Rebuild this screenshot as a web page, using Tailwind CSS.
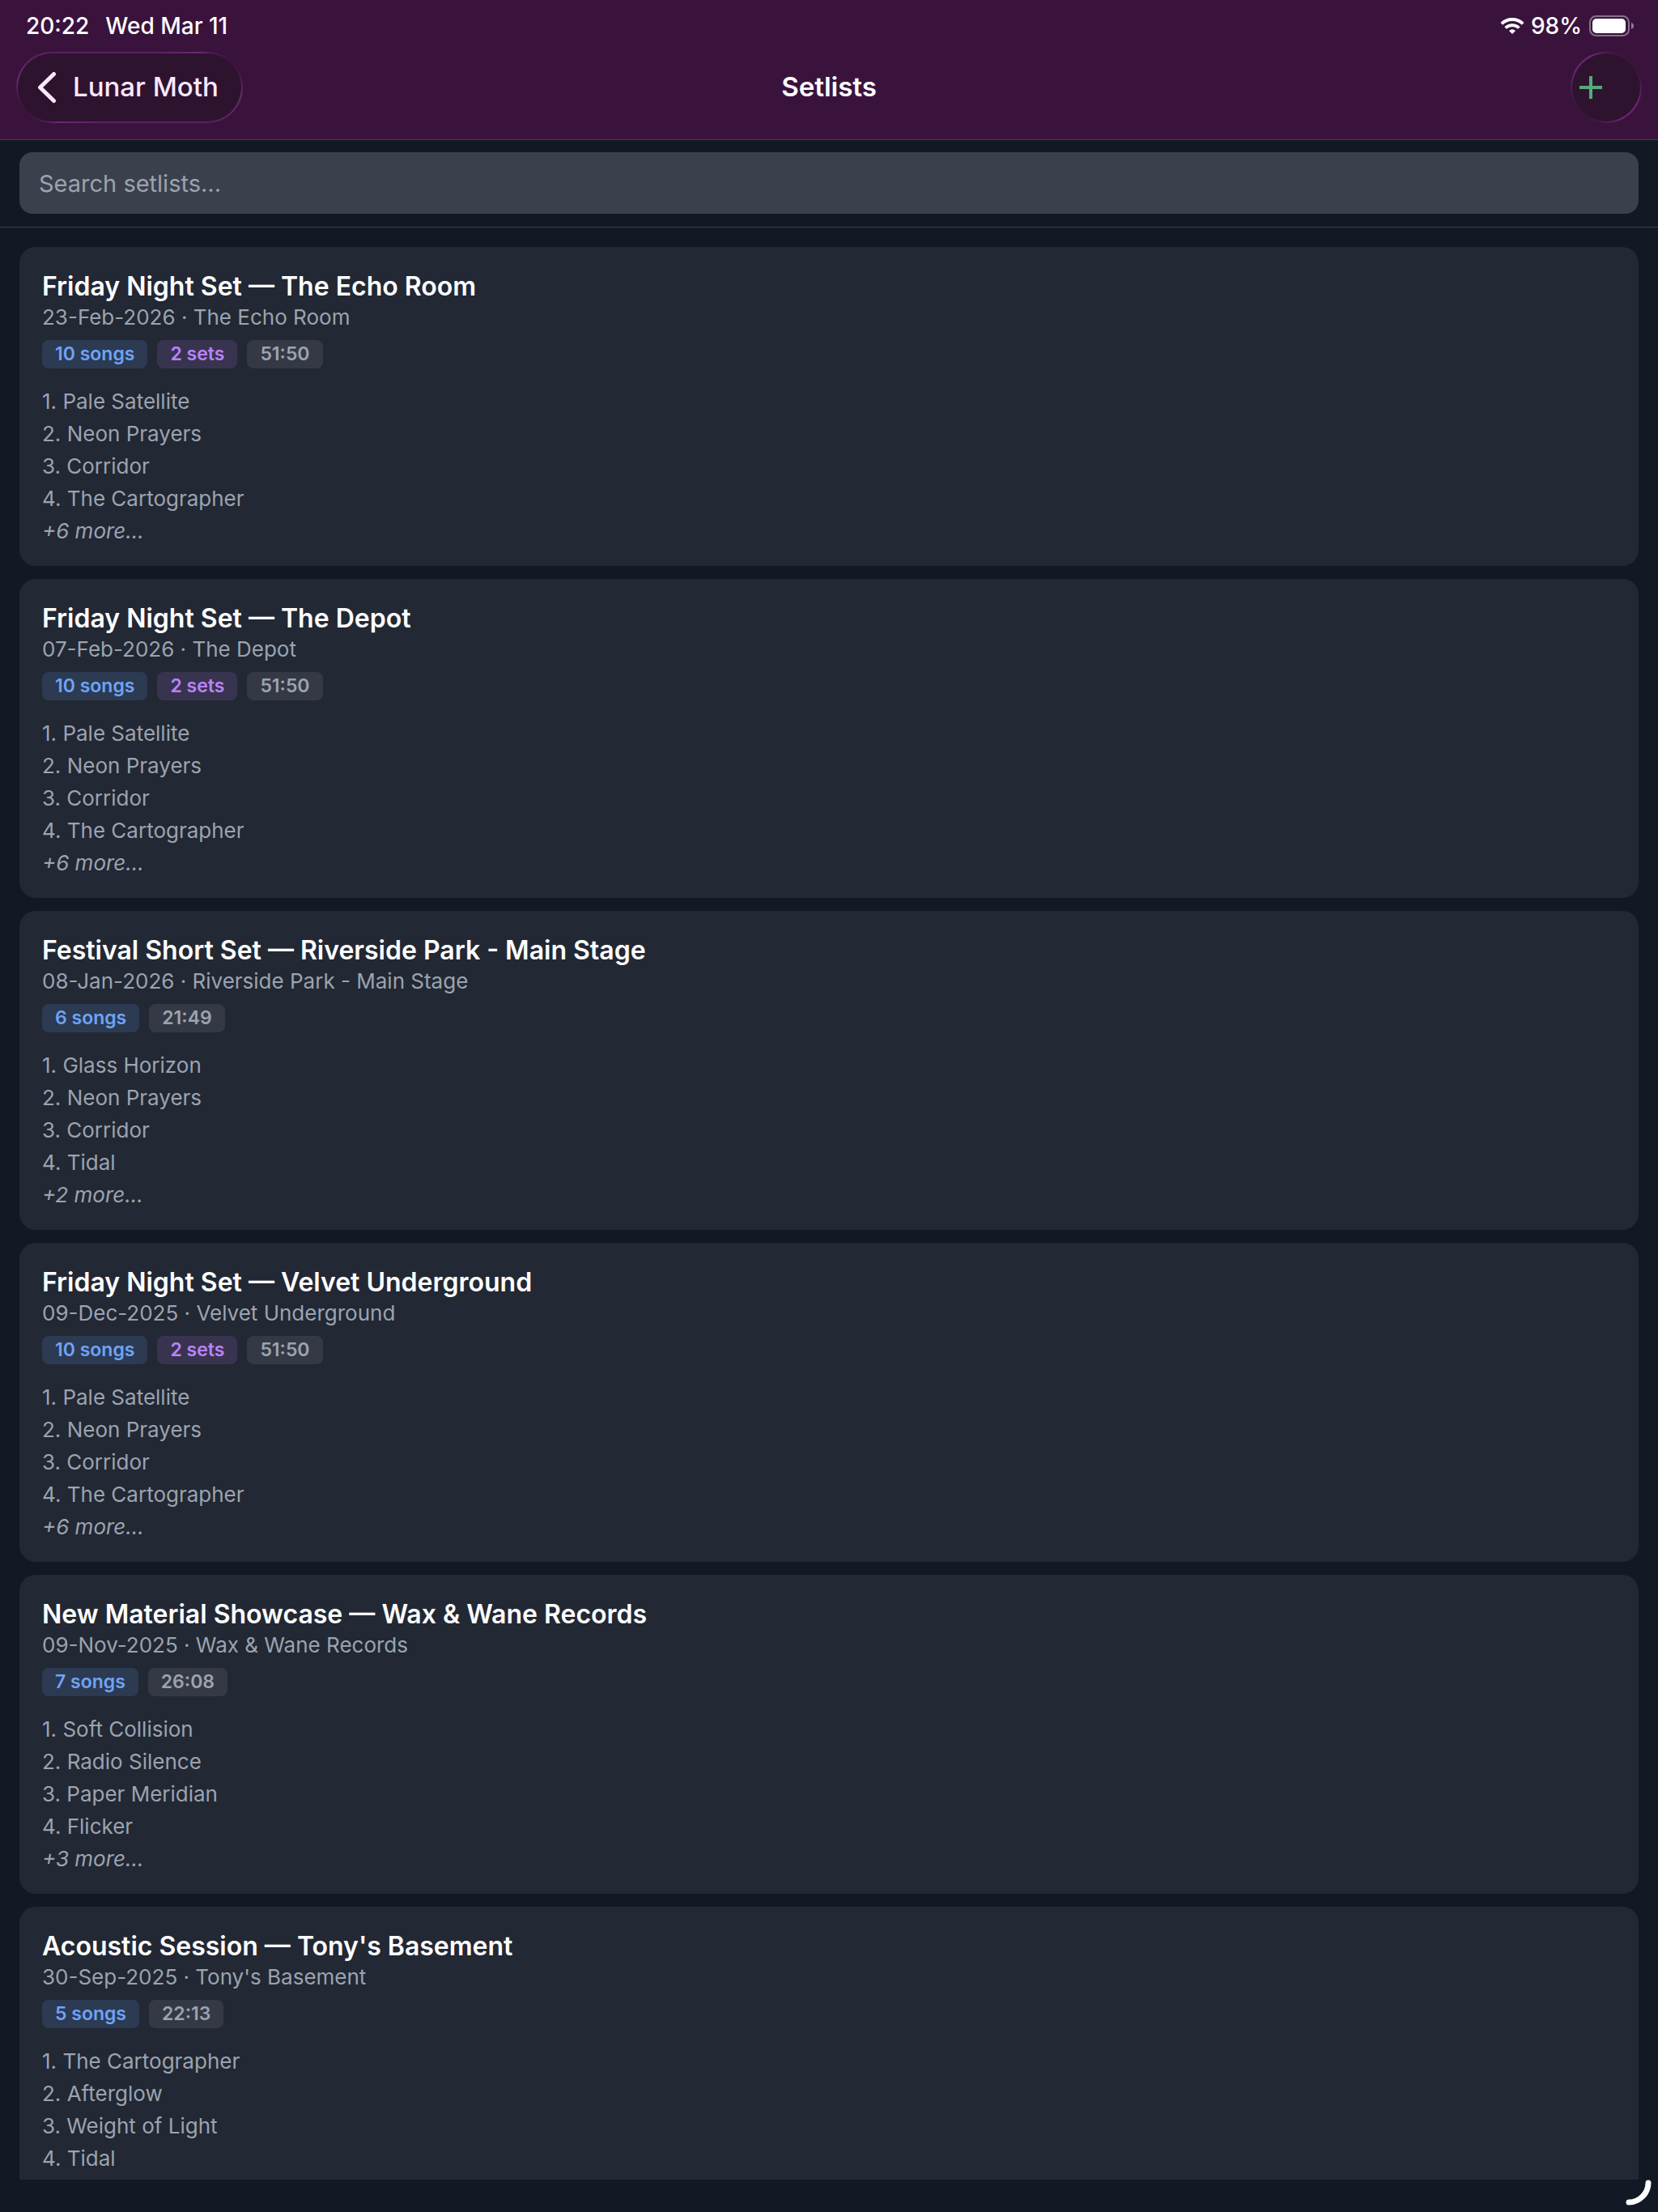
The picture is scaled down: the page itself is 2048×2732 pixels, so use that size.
<!DOCTYPE html>
<html lang="en">
  <head>
    <meta charset="UTF-8" />
    <meta name="viewport" content="width=device-width, initial-scale=1.0" />
    <title>Setlists - Lunar Moth</title>
    <script src="https://cdn.jsdelivr.net/npm/@tailwindcss/browser@4"></script>
  </head>
  <body class="h-screen flex flex-col overflow-hidden bg-[#121824] text-white font-['Inter',sans-serif]">
    <!-- Header -->
    <header class="bg-[#3a133c] border-b border-[#374151]">
      <!-- Status bar -->
      <div class="h-16 pl-8 pr-[30px] flex items-center justify-between text-[28px] leading-9 font-medium">
        <div class="flex gap-5">
          <span>20:22</span>
          <span>Wed Mar 11</span>
        </div>
        <div class="flex items-center gap-2">
          <svg class="w-[30px] h-5" viewBox="0 0 30 20" fill="none" stroke="#fff" stroke-width="3.8">
            <path d="M1.800 7.400a18.800 18.800 0 0 1 26.400 0" />
            <path d="M6.600 12.500a12 12 0 0 1 16.800 0" />
            <path d="M15 20l-4-4.1a5.8 5.8 0 0 1 8 0z" fill="#fff" stroke="none" />
          </svg>
          <span>98%</span>
          <svg class="w-14 h-[26px]" viewBox="0 0 56 26">
            <rect x="2" y="1" width="48" height="24" rx="7.5" fill="none" stroke="#fff" stroke-opacity=".4" stroke-width="2" />
            <rect x="5" y="4" width="41" height="18" rx="5" fill="#fff" />
            <path d="M53 9c2 .8 3 2.200 3 4s-1 3.200-3 4z" fill="#fff" fill-opacity=".45" />
          </svg>
        </div>
      </div>

      <!-- Navbar -->
      <nav class="grid grid-cols-3 items-center px-5 pb-5">
        <a href="#" class="justify-self-start rounded-full p-[2px] bg-[linear-gradient(45deg,#3a133c_7%,#6b2872_15%,#5a2160_30%,#5a2160_70%,#6b2872_85%,#3a133c_93%)]">
          <span class="h-[84px] pl-6 pr-7 flex items-center gap-5 rounded-full bg-[#2e132f] text-[#fae8ff] text-[33px] font-medium">
            <svg class="w-6 h-10" viewBox="0 0 24 40" fill="none" stroke="currentColor" stroke-width="5" stroke-linecap="round" stroke-linejoin="round">
              <path d="M20.500 3.500L3.500 20l17 16.500" />
            </svg>
            Lunar Moth
          </span>
        </a>
        <h1 class="justify-self-center text-[33px] font-semibold">Setlists</h1>
        <button type="button" aria-label="Add setlist" class="justify-self-end w-[88px] h-[88px] rounded-full p-[2px] bg-[linear-gradient(45deg,#3a133c_15%,#6b2872_40%,#6b2872_60%,#3a133c_85%)]">
          <span class="h-full pl-[9px] flex items-center rounded-full bg-[#2e132f]">
            <svg class="w-7 h-7" viewBox="0 0 28 28" stroke="#55aa7b" stroke-width="4">
              <path d="M14 0v28M0 14h28" />
            </svg>
          </span>
        </button>
      </nav>
    </header>

    <!-- Search -->
    <div class="px-6 pt-[15px] pb-4 border-b border-[#374151]">
      <input type="search" id="search" aria-label="Search setlists" placeholder="Search setlists..." class="block w-full h-[76px] px-6 rounded-2xl bg-[#3b404d] text-[29px] text-white placeholder:text-[#9ca3af] outline-none" />
    </div>

    <!-- Setlist cards -->
    <main id="setlists" class="flex-1 min-h-0 mb-10 px-6 pt-6 overflow-y-auto [scrollbar-width:none]"></main>

    <!-- Window resize handle -->
    <svg class="absolute bottom-2 right-2 w-8 h-8" viewBox="0 0 32 32" fill="none" stroke="#fff" stroke-width="7" stroke-linecap="round">
      <path d="M28 4c0 13-11 24-24 24" />
    </svg>

    <script>
      const setlists = [
        { title: 'Friday Night Set — The Echo Room', date: '23-Feb-2026', venue: 'The Echo Room', songs: 10, sets: 2, length: '51:50', top: ['Pale Satellite', 'Neon Prayers', 'Corridor', 'The Cartographer'] },
        { title: 'Friday Night Set — The Depot', date: '07-Feb-2026', venue: 'The Depot', songs: 10, sets: 2, length: '51:50', top: ['Pale Satellite', 'Neon Prayers', 'Corridor', 'The Cartographer'] },
        { title: 'Festival Short Set — Riverside Park - Main Stage', date: '08-Jan-2026', venue: 'Riverside Park - Main Stage', songs: 6, sets: 1, length: '21:49', top: ['Glass Horizon', 'Neon Prayers', 'Corridor', 'Tidal'] },
        { title: 'Friday Night Set — Velvet Underground', date: '09-Dec-2025', venue: 'Velvet Underground', songs: 10, sets: 2, length: '51:50', top: ['Pale Satellite', 'Neon Prayers', 'Corridor', 'The Cartographer'] },
        { title: 'New Material Showcase — Wax &amp; Wane Records', date: '09-Nov-2025', venue: 'Wax &amp; Wane Records', songs: 7, sets: 1, length: '26:08', top: ['Soft Collision', 'Radio Silence', 'Paper Meridian', 'Flicker'] },
        { title: "Acoustic Session — Tony's Basement", date: '30-Sep-2025', venue: "Tony's Basement", songs: 5, sets: 1, length: '22:13', top: ['The Cartographer', 'Afterglow', 'Weight of Light', 'Tidal'] },
      ];

      const list = document.getElementById('setlists');

      function renderSetlists(items) {
        list.innerHTML = items
          .map(
            (s) => `
          <article class="mb-4 px-7 pt-7 pb-6 rounded-[20px] bg-[#222834] text-[26px] text-[#9ca3af]">
            <h2 class="text-[32px] leading-[41px] font-semibold text-white">${s.title}</h2>
            <p class="leading-9">${s.date} · ${s.venue}</p>
            <div class="mt-[10px] flex gap-3 text-[23px] leading-[35px] font-semibold">
              <span class="px-4 rounded-lg bg-[#2c3a52] text-[#6ea3f5]">${s.songs} songs</span>
              ${s.sets > 1 ? `<span class="px-4 rounded-lg bg-[#383450] text-[#b983f8]">${s.sets} sets</span>` : ''}
              <span class="px-4 rounded-lg bg-[#343945]">${s.length}</span>
            </div>
            <ol class="mt-[21px] leading-10">
              ${s.top.map((name, i) => `<li>${i + 1}. ${name}</li>`).join('')}
            </ol>
            <p class="leading-[39px] italic">+${s.songs - s.top.length} more...</p>
          </article>`
          )
          .join('');
      }

      document.getElementById('search').addEventListener('input', function () {
        const q = this.value.toLowerCase();
        renderSetlists(setlists.filter((s) => s.title.toLowerCase().includes(q)));
      });

      renderSetlists(setlists);
    </script>
  </body>
</html>
